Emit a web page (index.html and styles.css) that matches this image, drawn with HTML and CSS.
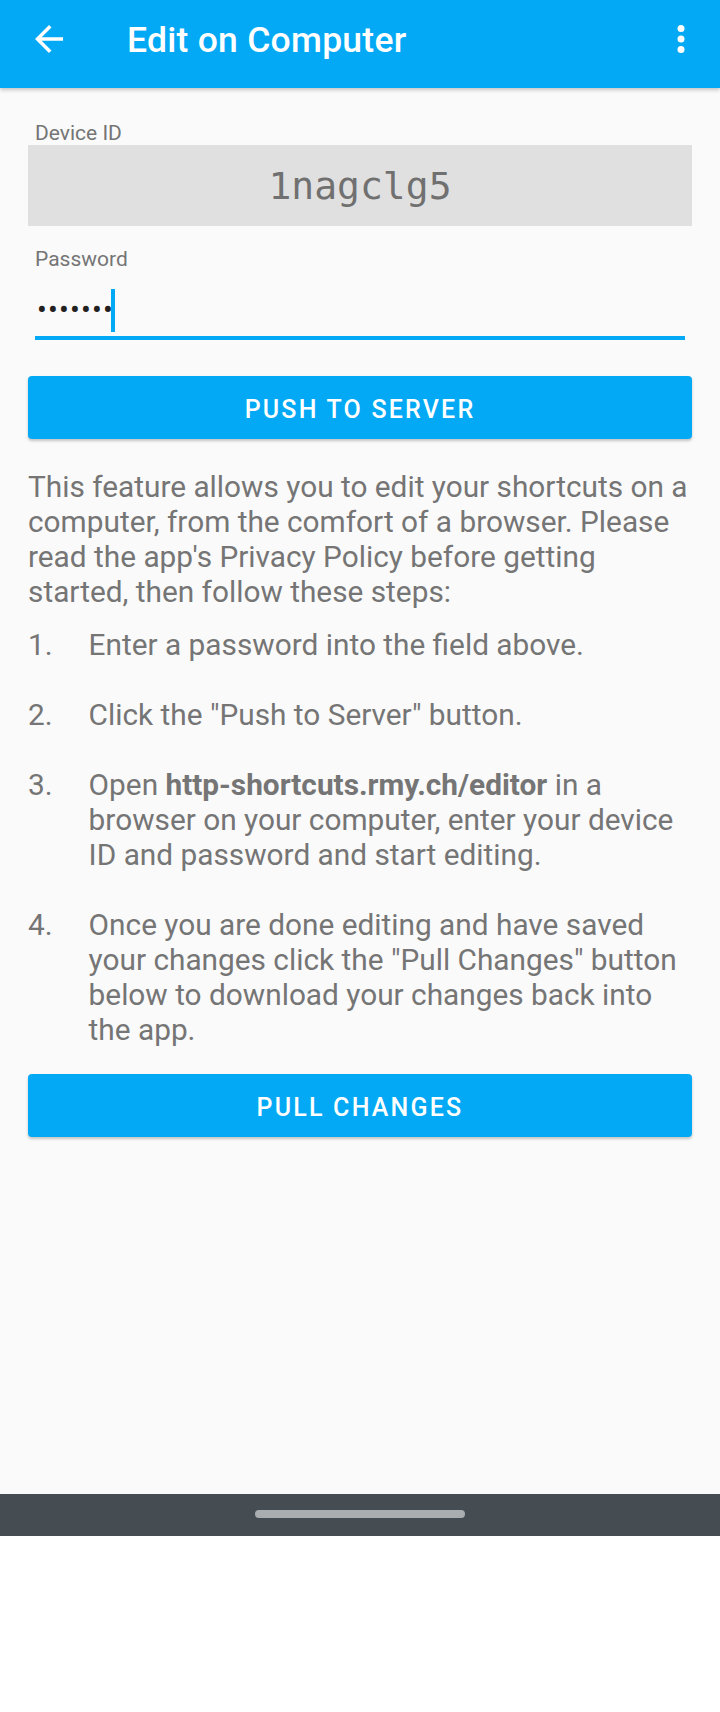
FILE: index.html
```html
<!DOCTYPE html>
<html lang="en">
<head>
<meta charset="utf-8">
<title>Edit on Computer</title>
<link rel="stylesheet" href="styles.css">
</head>
<body>
<div class="phone">
  <header class="appbar">
    <button class="icon-btn" aria-label="Back">
      <svg viewBox="0 0 24 24"><path d="M20 11H7.83l5.59-5.59L12 4l-8 8 8 8 1.41-1.41L7.83 13H20v-2z"/></svg>
    </button>
    <h1 class="title">Edit on Computer</h1>
    <button class="icon-btn more" aria-label="More options">
      <svg viewBox="0 0 24 24"><circle cx="12" cy="6" r="2"/><circle cx="12" cy="12" r="2"/><circle cx="12" cy="18" r="2"/></svg>
    </button>
  </header>

  <main class="content">
    <div class="field-label first">Device ID</div>
    <div class="device-id">1nagclg5</div>

    <div class="field-label second">Password</div>
    <div class="pw-field">
      <span class="pw-dots">•••••••</span><span class="cursor"></span>
    </div>

    <button class="action-btn push">PUSH TO SERVER</button>

    <p class="intro">This feature allows you to edit your shortcuts on a computer, from the comfort of a browser. Please read the app's Privacy Policy before getting started, then follow these steps:</p>

    <ol class="steps">
      <li><span class="num">1.</span><span class="txt">Enter a password into the field above.</span></li>
      <li><span class="num">2.</span><span class="txt">Click the "Push to Server" button.</span></li>
      <li><span class="num">3.</span><span class="txt">Open <b>http-shortcuts.rmy.ch/editor</b> in a browser on your computer, enter your device ID and password and start editing.</span></li>
      <li><span class="num">4.</span><span class="txt">Once you are done editing and have saved your changes click the "Pull Changes" button below to download your changes back into the app.</span></li>
    </ol>

    <button class="action-btn pull">PULL CHANGES</button>
  </main>

  <nav class="navbar"><span class="handle"></span></nav>
</div>
</body>
</html>
```

FILE: styles.css
```css
* { box-sizing: border-box; }

html, body {
  margin: 0;
  padding: 0;
  background: #ffffff;
}

body {
  width: 720px;
  height: 1712px;
  font-family: Roboto, "Noto Sans", "Liberation Sans", sans-serif;
}

.phone {
  width: 720px;
  height: 1536px;
  display: flex;
  flex-direction: column;
}

.appbar {
  position: relative;
  z-index: 2;
  height: 88px;
  flex: 0 0 88px;
  background: #03A9F4;
  display: flex;
  align-items: center;
  padding: 0 18px 10px 28px;
  box-shadow: 0 2px 4px rgba(0, 0, 0, 0.22);
}

.icon-btn {
  width: 42px;
  height: 42px;
  padding: 0;
  margin: 0;
  border: 0;
  background: none;
  display: flex;
}

.icon-btn svg {
  width: 42px;
  height: 42px;
  fill: #ffffff;
}

.icon-btn.more {
  margin-left: auto;
}

.title {
  margin: 2px 0 0 57px;
  font-size: 35.5px;
  line-height: 42px;
  font-weight: 500;
  letter-spacing: 0.25px;
  color: #ffffff;
}

.content {
  flex: 1;
  background: #FAFAFA;
  padding: 0 28px;
  display: flex;
  flex-direction: column;
}

.field-label {
  font-size: 21px;
  line-height: 24px;
  color: #757575;
  padding-left: 7px;
}

.field-label.first { margin-top: 32.5px; }
.field-label.second { margin-top: 21.5px; }

.device-id {
  height: 81px;
  padding-top: 3px;
  background: #E0E0E0;
  display: flex;
  align-items: center;
  justify-content: center;
  font-family: "DejaVu Sans Mono", "Liberation Mono", monospace;
  font-size: 38px;
  line-height: 43px;
  color: #707070;
}

.pw-field {
  margin: 0 7px;
  height: 68.5px;
  padding: 15px 0 0 2px;
  border-bottom: 4px solid #03A9F4;
  display: flex;
  align-items: center;
}

.pw-dots {
  font-size: 29px;
  line-height: 43px;
  color: #212121;
  letter-spacing: 1.2px;
}

.cursor {
  width: 4px;
  height: 43px;
  background: #03A9F4;
  margin-left: -3px;
}

.action-btn {
  height: 63.5px;
  padding: 4px 0 0;
  margin: 0;
  border: 0;
  border-radius: 4px;
  background: #03A9F4;
  color: #ffffff;
  font-family: Roboto, "Noto Sans", sans-serif;
  font-size: 25px;
  font-weight: 500;
  letter-spacing: 2.2px;
  box-shadow: 0 2px 3px rgba(0, 0, 0, 0.22);
}

.action-btn.push { margin-top: 36px; }
.action-btn.pull { margin-top: 26.5px; }

.intro {
  margin: 30px 0 0;
  font-size: 29.8px;
  line-height: 35px;
  color: #757575;
}

.steps {
  list-style: none;
  margin: 18px 0 0;
  padding: 0;
  display: flex;
  flex-direction: column;
  gap: 35px;
  font-size: 29.8px;
  line-height: 35px;
  color: #757575;
}

.steps li {
  display: grid;
  grid-template-columns: 60.6px 1fr;
}

.steps b {
  font-weight: 700;
}

.navbar {
  flex: 0 0 42px;
  background: #454C52;
  display: flex;
  justify-content: center;
  padding-top: 16px;
}

.handle {
  width: 210px;
  height: 8px;
  border-radius: 4px;
  background: #A9ADB0;
}
```
